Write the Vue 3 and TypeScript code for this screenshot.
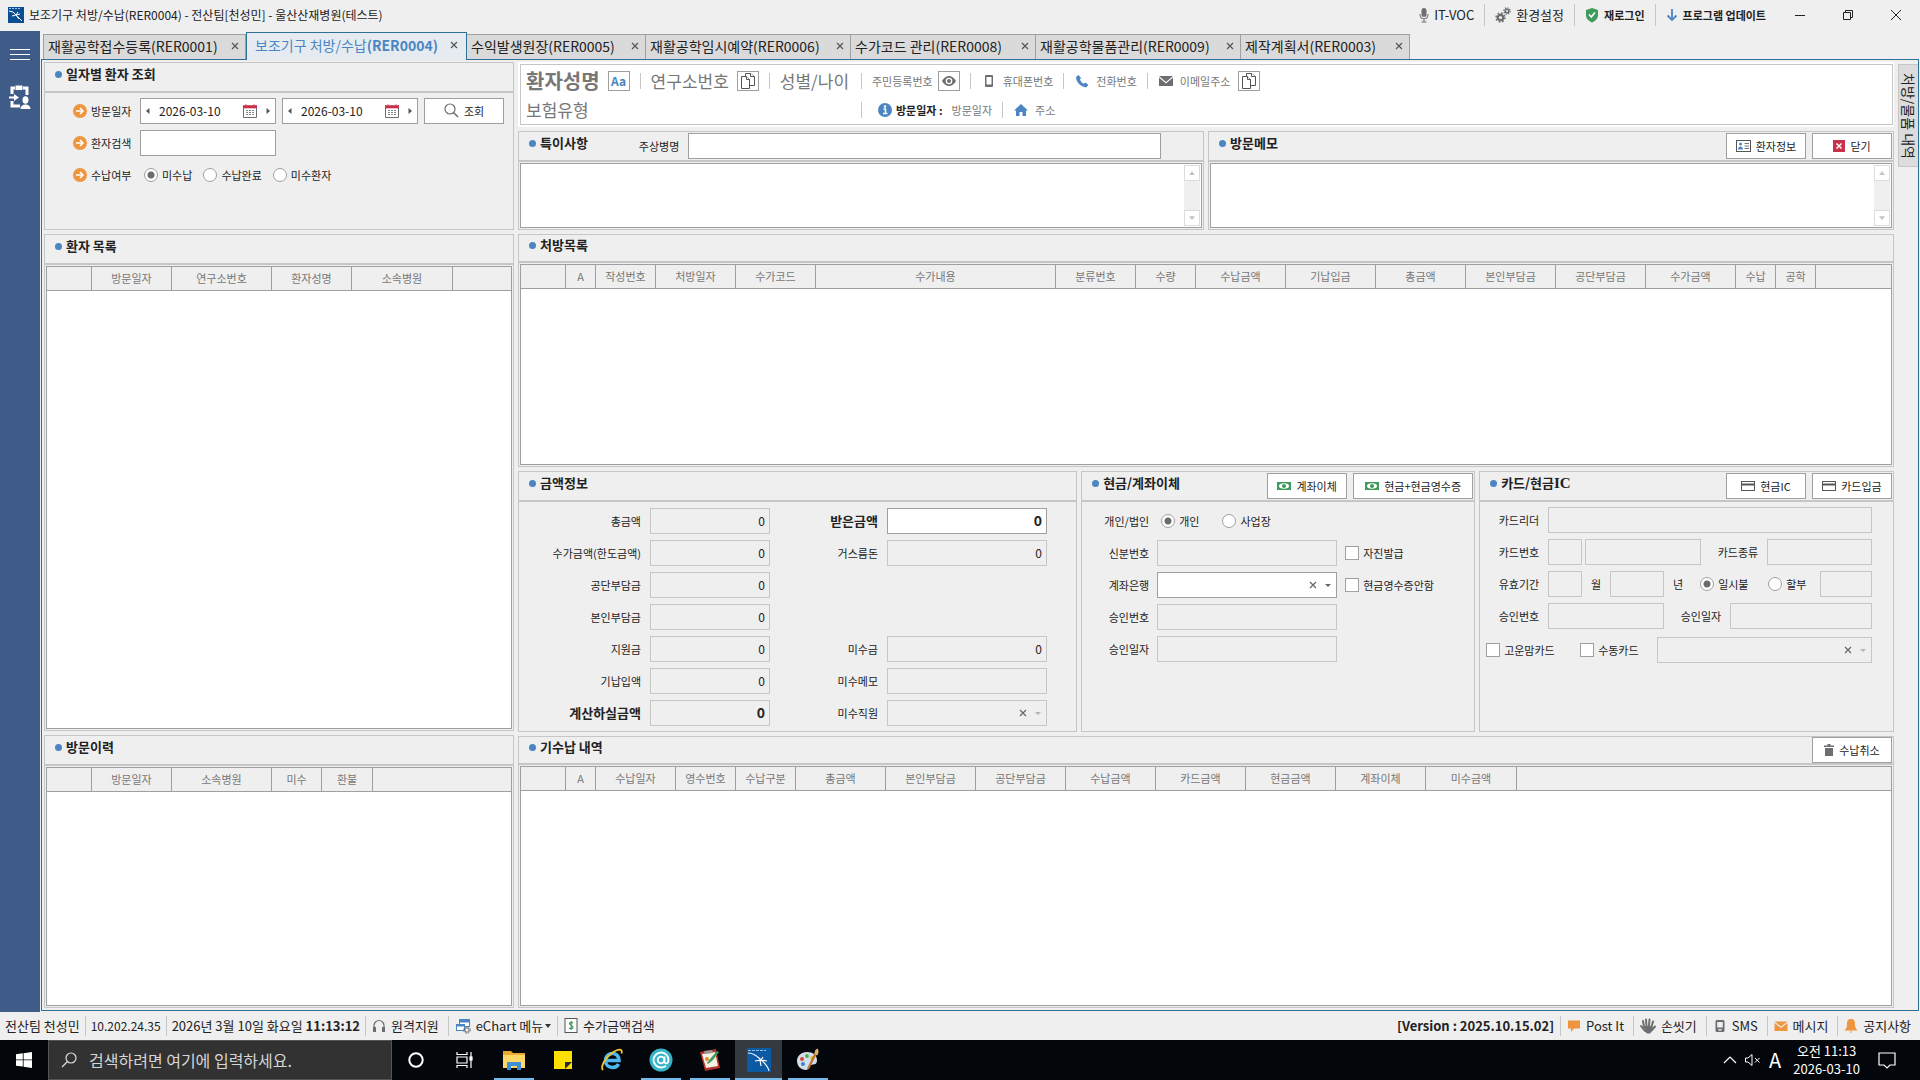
<script setup lang="ts">
import { ref } from 'vue'

interface Column {
  label: string
  width?: number
}

interface Tab {
  name: string
  code: string
  width: number
}

const tabs: Tab[] = [
  { name: '재활공학접수등록', code: '(RER0001)', width: 203 },
  { name: '보조기구 처방/수납', code: '(RER0004)', width: 221 },
  { name: '수익발생원장', code: '(RER0005)', width: 179 },
  { name: '재활공학임시예약', code: '(RER0006)', width: 205 },
  { name: '수가코드 관리', code: '(RER0008)', width: 185 },
  { name: '재활공학물품관리', code: '(RER0009)', width: 205 },
  { name: '제작계획서', code: '(RER0003)', width: 169 },
]
const activeTab = ref('(RER0004)')

const patientColumns: Column[] = [
  { label: '', width: 45 },
  { label: '방문일자', width: 80 },
  { label: '연구소번호', width: 100 },
  { label: '환자성명', width: 80 },
  { label: '소속병원', width: 101 },
  { label: '' },
]

const visitColumns: Column[] = [
  { label: '', width: 45 },
  { label: '방문일자', width: 80 },
  { label: '소속병원', width: 100 },
  { label: '미수', width: 50 },
  { label: '환불', width: 51 },
  { label: '' },
]

const orderColumns: Column[] = [
  { label: '', width: 45 },
  { label: 'A', width: 30 },
  { label: '작성번호', width: 60 },
  { label: '처방일자', width: 80 },
  { label: '수가코드', width: 80 },
  { label: '수가내용', width: 240 },
  { label: '분류번호', width: 80 },
  { label: '수량', width: 60 },
  { label: '수납금액', width: 90 },
  { label: '기납입금', width: 90 },
  { label: '총금액', width: 90 },
  { label: '본인부담금', width: 90 },
  { label: '공단부담금', width: 90 },
  { label: '수가금액', width: 90 },
  { label: '수납', width: 40 },
  { label: '공학', width: 40 },
  { label: '' },
]

const receiptColumns: Column[] = [
  { label: '', width: 45 },
  { label: 'A', width: 30 },
  { label: '수납일자', width: 80 },
  { label: '영수번호', width: 60 },
  { label: '수납구분', width: 60 },
  { label: '총금액', width: 90 },
  { label: '본인부담금', width: 90 },
  { label: '공단부담금', width: 90 },
  { label: '수납금액', width: 90 },
  { label: '카드금액', width: 90 },
  { label: '현금금액', width: 90 },
  { label: '계좌이체', width: 90 },
  { label: '미수금액', width: 91 },
  { label: '' },
]

const visitFrom = ref('2026-03-10')
const visitTo = ref('2026-03-10')
const keyword = ref('')
const payState = ref('미수납')
const payStates = ['미수납', '수납완료', '미수환자']
const payer = ref('개인')
const installment = ref('일시불')
const received = ref('0')
</script>

<template>
  <div class="screen">
    <header class="titlebar">
      <svg class="app-logo" width="16" height="16" viewBox="0 0 16 16">
        <rect width="16" height="16" fill="#0b4f93" />
        <path d="M1 1.500h12" stroke="#9cc3e6" stroke-dasharray="2 1" />
        <path d="M1 4l4 1 9 9M10 5L8 8l-4 1M8 8l3 4M8 8l4-1" stroke="#fff" fill="none" />
      </svg>
      <h1>보조기구 처방/수납(RER0004) - 전산팀[천성민] - 울산산재병원(테스트)</h1>
      <nav class="title-tools">
        <button class="tool" type="button">
          <svg width="10" height="16" viewBox="0 0 10 16">
            <rect x="2.500" y="1" width="5" height="9" rx="2.500" fill="#6d6e71" />
            <path d="M1 7v1a4 4 0 0 0 8 0V7M5 12v3M2.500 15h5" stroke="#6d6e71" fill="none" />
          </svg>
          IT-VOC
        </button>
        <button class="tool" type="button">
          <svg width="16" height="16" viewBox="0 0 16 16" fill="none" stroke="#6d6e71">
            <circle cx="5.500" cy="10.500" r="2.700" stroke-width="2.200" />
            <circle cx="5.500" cy="10.500" r="4.400" stroke-width="1.600" stroke-dasharray="1.700 1.750" />
            <circle cx="12" cy="4" r="1.800" stroke-width="1.600" />
            <circle cx="12" cy="4" r="3.100" stroke-width="1.400" stroke-dasharray="1.200 1.230" />
          </svg>
          환경설정
        </button>
        <button class="tool strong" type="button">
          <svg width="14" height="16" viewBox="0 0 14 16">
            <path d="M7 1l6 2v5c0 4-3 6-6 7.500C4 14 1 12 1 8V3z" fill="#3f9b5b" />
            <path d="M4 7.500l2.300 2.500L10 5.500" stroke="#fff" stroke-width="1.600" fill="none" />
          </svg>
          재로그인
        </button>
        <button class="tool strong" type="button">
          <svg width="12" height="14" viewBox="0 0 12 14" fill="none" stroke="#4b86c2" stroke-width="1.800">
            <path d="M6 1v11M1.500 7.500L6 12l4.500-4.500" />
          </svg>
          프로그램 업데이트
        </button>
      </nav>
      <div class="window-controls">
        <button type="button" aria-label="최소화">
          <svg width="12" height="12" viewBox="0 0 12 12"><path d="M1 6.500h10" stroke="#222" /></svg>
        </button>
        <button type="button" aria-label="이전 크기로">
          <svg width="12" height="12" viewBox="0 0 12 12" fill="none" stroke="#222">
            <path d="M1.500 3.500h7v7h-7zM3.500 3.500v-2h7v7h-2" />
          </svg>
        </button>
        <button type="button" aria-label="창 닫기">
          <svg width="12" height="12" viewBox="0 0 12 12"><path d="M1 1l10 10M11 1L1 11" stroke="#222" /></svg>
        </button>
      </div>
    </header>

    <div class="workspace">
      <aside class="sidebar">
        <button type="button" aria-label="메뉴">
          <svg width="20" height="12" viewBox="0 0 20 12"><path d="M0 0.500h20M0 5.500h20M0 10.500h20" stroke="#fff" /></svg>
        </button>
        <button type="button" aria-label="환자 접수">
          <svg width="22" height="24" viewBox="0 0 22 24">
            <path d="M3 9V3h3M14 3h4v7M3 16v5h8" stroke="#fff" stroke-width="3" fill="none" />
            <rect x="6.500" y="0.500" width="7" height="4.500" fill="#fff" />
            <path d="M0 11.500h5V9l5 3.500L5 16v-2.500H0z" fill="#fff" />
            <ellipse cx="16.500" cy="15" rx="3" ry="3.800" fill="#fff" />
            <path d="M11.500 24c0-3 2-4.500 5-4.500s5 1.500 5 4.500z" fill="#fff" />
          </svg>
        </button>
      </aside>

      <div class="main">
        <nav class="tabs">
          <div
            v-for="tab in tabs"
            :key="tab.code"
            class="tab"
            :class="{ active: tab.code === activeTab }"
            :style="{ width: tab.width + 'px' }"
          >
            <button class="tab-label" type="button" @click="activeTab = tab.code">
              {{ tab.name }}<span>{{ tab.code }}</span>
            </button>
            <button class="tab-close" type="button" aria-label="탭 닫기">
              <svg width="8" height="8" viewBox="0 0 8 8"><path d="M1 1l6 6M7 1L1 7" stroke="#555" stroke-width="1.200" /></svg>
            </button>
          </div>
        </nav>

        <div class="frame">
          <div class="left">
            <section class="panel search">
              <div class="panel-head"><h2>일자별 환자 조회</h2></div>
              <form class="search-form" @submit.prevent>
                <div class="search-row">
                  <label class="search-label" for="visit-from">
                    <svg class="arrow-dot" width="14" height="14" viewBox="0 0 14 14">
                      <circle cx="7" cy="7" r="7" fill="#f0953f" />
                      <path d="M3 7h7M7 4l3 3-3 3" stroke="#fff" stroke-width="1.600" fill="none" />
                    </svg>
                    방문일자
                  </label>
                  <div class="date">
                    <button type="button" aria-label="이전"><svg width="4" height="6" viewBox="0 0 4 6"><path d="M3.500 0v6L0 3z" fill="#555" /></svg></button>
                    <input id="visit-from" v-model="visitFrom" type="text" />
                    <button type="button" aria-label="달력">
                      <svg width="14" height="14" viewBox="0 0 14 14">
                        <path d="M0.500 3.500v10h13v-10" stroke="#6d6e71" fill="#fff" />
                        <path d="M0 1.500h14v2.500H0zM3 0v2M11 0v2" fill="#c9304a" stroke="#c9304a" stroke-width="0.600" />
                        <path d="M3 6.500h8M3 8.500h8M3 10.500h8" stroke="#888" stroke-dasharray="2 1" />
                      </svg>
                    </button>
                    <button type="button" aria-label="다음"><svg width="4" height="6" viewBox="0 0 4 6"><path d="M0.500 0v6L4 3z" fill="#555" /></svg></button>
                  </div>
                  <div class="date">
                    <button type="button" aria-label="이전"><svg width="4" height="6" viewBox="0 0 4 6"><path d="M3.500 0v6L0 3z" fill="#555" /></svg></button>
                    <input v-model="visitTo" type="text" aria-label="방문일자 종료" />
                    <button type="button" aria-label="달력">
                      <svg width="14" height="14" viewBox="0 0 14 14">
                        <path d="M0.500 3.500v10h13v-10" stroke="#6d6e71" fill="#fff" />
                        <path d="M0 1.500h14v2.500H0zM3 0v2M11 0v2" fill="#c9304a" stroke="#c9304a" stroke-width="0.600" />
                        <path d="M3 6.500h8M3 8.500h8M3 10.500h8" stroke="#888" stroke-dasharray="2 1" />
                      </svg>
                    </button>
                    <button type="button" aria-label="다음"><svg width="4" height="6" viewBox="0 0 4 6"><path d="M0.500 0v6L4 3z" fill="#555" /></svg></button>
                  </div>
                  <button class="btn" type="submit">
                    <svg width="15" height="15" viewBox="0 0 15 15" fill="none" stroke="#6d6e71" stroke-width="1.200">
                      <circle cx="6" cy="6" r="5" /><path d="M9.500 9.500L14 14" stroke-width="1.600" />
                    </svg>
                    조회
                  </button>
                </div>
                <div class="search-row">
                  <label class="search-label" for="keyword">
                    <svg class="arrow-dot" width="14" height="14" viewBox="0 0 14 14">
                      <circle cx="7" cy="7" r="7" fill="#f0953f" />
                      <path d="M3 7h7M7 4l3 3-3 3" stroke="#fff" stroke-width="1.600" fill="none" />
                    </svg>
                    환자검색
                  </label>
                  <input id="keyword" v-model="keyword" class="field open keyword" type="text" />
                </div>
                <div class="search-row">
                  <span class="search-label">
                    <svg class="arrow-dot" width="14" height="14" viewBox="0 0 14 14">
                      <circle cx="7" cy="7" r="7" fill="#f0953f" />
                      <path d="M3 7h7M7 4l3 3-3 3" stroke="#fff" stroke-width="1.600" fill="none" />
                    </svg>
                    수납여부
                  </span>
                  <div class="states">
                    <label v-for="state in payStates" :key="state" class="choice">
                      <input v-model="payState" type="radio" name="pay-state" :value="state" />{{ state }}
                    </label>
                  </div>
                </div>
              </form>
            </section>

            <section class="panel grow">
              <div class="panel-head"><h2>환자 목록</h2></div>
              <div class="grid-box">
                <table>
                  <colgroup>
                    <col v-for="(c, i) in patientColumns" :key="i" :style="c.width ? { width: c.width + 'px' } : undefined" />
                  </colgroup>
                  <thead>
                    <tr><th v-for="(c, i) in patientColumns" :key="i">{{ c.label }}</th></tr>
                  </thead>
                </table>
              </div>
            </section>

            <section class="panel visits">
              <div class="panel-head"><h2>방문이력</h2></div>
              <div class="grid-box">
                <table>
                  <colgroup>
                    <col v-for="(c, i) in visitColumns" :key="i" :style="c.width ? { width: c.width + 'px' } : undefined" />
                  </colgroup>
                  <thead>
                    <tr><th v-for="(c, i) in visitColumns" :key="i">{{ c.label }}</th></tr>
                  </thead>
                </table>
              </div>
            </section>
          </div>

          <div class="right">
            <section class="patient">
              <div class="patient-inner">
                <div class="info-row">
                  <div class="info-lead">
                    <strong class="patient-name">환자성명</strong>
                    <button class="mini aa" type="button">Aa</button>
                    <i class="sep"></i>
                    <span class="big">연구소번호</span>
                    <button class="mini" type="button" aria-label="연구소번호 복사">
                      <svg width="14" height="16" viewBox="0 0 14 16" fill="#fff" stroke="#555">
                        <path d="M4.500 0.500h5l4 3v9h-9z" /><path d="M9.500 0.500v3h4" />
                        <path d="M0.500 3.500h5l3 3v9h-8z" /><path d="M5.500 3.500v3h3" />
                      </svg>
                    </button>
                    <i class="sep"></i>
                    <span class="big">성별/나이</span>
                  </div>
                  <i class="sep"></i>
                  <span>주민등록번호</span>
                  <button class="mini eye" type="button" aria-label="주민등록번호 보기">
                    <svg width="14" height="10" viewBox="0 0 14 10">
                      <path d="M0 5c2-3.500 4.500-5 7-5s5 1.500 7 5c-2 3.500-4.500 5-7 5S2 8.500 0 5z" fill="#6d6e71" />
                      <circle cx="7" cy="5" r="3.300" fill="#fff" /><circle cx="7" cy="5" r="2" fill="#6d6e71" />
                    </svg>
                  </button>
                  <i class="sep"></i>
                  <svg class="info-icon" width="14" height="14" viewBox="0 0 14 14">
                    <path fill-rule="evenodd" d="M4 1h6q1 0 1 1v10q0 1-1 1H4q-1 0-1-1V2q0-1 1-1zM4.500 3v7.500h5V3z" fill="#6d6e71" />
                  </svg>
                  <span>휴대폰번호</span>
                  <i class="sep"></i>
                  <svg class="info-icon" width="14" height="14" viewBox="0 0 14 14">
                    <path d="M3.500 1L1 3c0 5 5 10 10 10.500l2.500-2.500-3-2.500-1.800 1.300C7 9 5.500 7 5 5.500L6 4z" fill="#4b86c2" />
                  </svg>
                  <span>전화번호</span>
                  <i class="sep"></i>
                  <svg class="info-icon" width="14" height="14" viewBox="0 0 14 14">
                    <path d="M0 2h14L7 8z" fill="#6d6e71" /><path d="M0 3.500V12h14V3.500l-7 6z" fill="#6d6e71" />
                  </svg>
                  <span>이메일주소</span>
                  <button class="mini" type="button" aria-label="이메일주소 복사">
                    <svg width="14" height="16" viewBox="0 0 14 16" fill="#fff" stroke="#555">
                      <path d="M4.500 0.500h5l4 3v9h-9z" /><path d="M9.500 0.500v3h4" />
                      <path d="M0.500 3.500h5l3 3v9h-8z" /><path d="M5.500 3.500v3h3" />
                    </svg>
                  </button>
                </div>
                <div class="info-row second">
                  <div class="info-lead"><span class="big">보험유형</span></div>
                  <i class="sep"></i>
                  <svg class="info-icon after-lead" width="14" height="14" viewBox="0 0 14 14">
                    <circle cx="7" cy="7" r="7" fill="#4b86c2" />
                    <path d="M5.500 6h2v4.500M5 10.500h4.500" stroke="#fff" stroke-width="1.500" fill="none" />
                    <circle cx="7" cy="3.500" r="1.200" fill="#fff" />
                  </svg>
                  <span class="visit-date"><b>방문일자 :</b>방문일자</span>
                  <i class="sep"></i>
                  <svg class="info-icon" width="14" height="14" viewBox="0 0 14 14">
                    <path d="M7 1l7 6.500h-2V13H8.500V9h-3v4H2V7.500H0z" fill="#4b86c2" />
                  </svg>
                  <span>주소</span>
                </div>
              </div>
            </section>

            <div class="memo-row">
              <section class="panel">
                <div class="panel-head">
                  <h2>특이사항</h2>
                  <label class="diagnosis-label" for="diagnosis">주상병명</label>
                  <input id="diagnosis" class="field open diagnosis" type="text" />
                </div>
                <div class="memo">
                  <textarea aria-label="특이사항"></textarea>
                  <div class="scroll">
                    <button type="button" aria-label="위로"><svg width="6" height="4" viewBox="0 0 8 5"><path d="M0 5l4-5 4 5z" fill="#c4c4c4" /></svg></button>
                    <button type="button" aria-label="아래로"><svg width="6" height="4" viewBox="0 0 8 5"><path d="M0 0l4 5 4-5z" fill="#c4c4c4" /></svg></button>
                  </div>
                </div>
              </section>
              <section class="panel">
                <div class="panel-head">
                  <h2>방문메모</h2>
                  <div class="actions">
                    <button class="btn" type="button">
                      <svg width="15" height="12" viewBox="0 0 15 12">
                        <rect x="0.500" y="0.500" width="14" height="11" fill="#fff" stroke="#555" />
                        <circle cx="4.500" cy="4" r="1.500" fill="#4b86c2" />
                        <path d="M2 9.500c0-4 5-4 5 0z" fill="#4b86c2" />
                        <path d="M8.500 3.500H13M8.500 6H13M8.500 8.500H13" stroke="#777" />
                      </svg>
                      환자정보
                    </button>
                    <button class="btn" type="button">
                      <svg width="12" height="12" viewBox="0 0 12 12">
                        <rect width="12" height="12" fill="#c9304a" /><path d="M3.500 3.500l5 5M8.500 3.500l-5 5" stroke="#fff" stroke-width="1.500" />
                      </svg>
                      닫기
                    </button>
                  </div>
                </div>
                <div class="memo">
                  <textarea aria-label="방문메모"></textarea>
                  <div class="scroll">
                    <button type="button" aria-label="위로"><svg width="6" height="4" viewBox="0 0 8 5"><path d="M0 5l4-5 4 5z" fill="#c4c4c4" /></svg></button>
                    <button type="button" aria-label="아래로"><svg width="6" height="4" viewBox="0 0 8 5"><path d="M0 0l4 5 4-5z" fill="#c4c4c4" /></svg></button>
                  </div>
                </div>
              </section>
            </div>

            <section class="panel compact orders">
              <div class="panel-head"><h2>처방목록</h2></div>
              <div class="grid-box">
                <table>
                  <colgroup>
                    <col v-for="(c, i) in orderColumns" :key="i" :style="c.width ? { width: c.width + 'px' } : undefined" />
                  </colgroup>
                  <thead>
                    <tr><th v-for="(c, i) in orderColumns" :key="i">{{ c.label }}</th></tr>
                  </thead>
                </table>
              </div>
            </section>

            <div class="pay-row">
              <section class="panel amounts">
                <div class="panel-head"><h2>금액정보</h2></div>
                <div class="amount-grid">
                  <label for="total">총금액</label>
                  <input id="total" class="field" value="0" readonly />
                  <label class="key" for="received">받은금액</label>
                  <input id="received" v-model="received" class="field open key" />
                  <label for="limit">수가금액(한도금액)</label>
                  <input id="limit" class="field" value="0" readonly />
                  <label for="change">거스름돈</label>
                  <input id="change" class="field" value="0" readonly />
                  <label for="corp">공단부담금</label>
                  <input id="corp" class="field" value="0" readonly />
                  <label class="first" for="own">본인부담금</label>
                  <input id="own" class="field" value="0" readonly />
                  <label class="first" for="support">지원금</label>
                  <input id="support" class="field" value="0" readonly />
                  <label for="unpaid">미수금</label>
                  <input id="unpaid" class="field" value="0" readonly />
                  <label for="prepaid">기납입액</label>
                  <input id="prepaid" class="field" value="0" readonly />
                  <label for="unpaid-memo">미수메모</label>
                  <input id="unpaid-memo" class="field" readonly />
                  <label class="key" for="due">계산하실금액</label>
                  <input id="due" class="field key" value="0" readonly />
                  <label for="unpaid-staff">미수직원</label>
                  <div class="combo off">
                    <select id="unpaid-staff" disabled></select>
                    <button type="button" aria-label="지우기"><svg width="8" height="8" viewBox="0 0 8 8"><path d="M1 1l6 6M7 1L1 7" stroke="#666" stroke-width="1.200" /></svg></button>
                    <svg class="caret" width="6" height="3" viewBox="0 0 6 3"><path d="M0 0h6L3 3z" fill="#b5b5b5" /></svg>
                  </div>
                </div>
              </section>

              <section class="panel cash">
                <div class="panel-head">
                  <h2>현금/계좌이체</h2>
                  <div class="actions">
                    <button class="btn" type="button">
                      <svg width="14" height="8" viewBox="0 0 14 8">
                        <rect width="14" height="8" fill="#3f9b5b" /><ellipse cx="7" cy="4" rx="5" ry="2.800" fill="#fff" /><circle cx="7" cy="4" r="2" fill="#3f9b5b" />
                      </svg>
                      계좌이체
                    </button>
                    <button class="btn wide" type="button">
                      <svg width="14" height="8" viewBox="0 0 14 8">
                        <rect width="14" height="8" fill="#3f9b5b" /><ellipse cx="7" cy="4" rx="5" ry="2.800" fill="#fff" /><circle cx="7" cy="4" r="2" fill="#3f9b5b" />
                      </svg>
                      현금+현금영수증
                    </button>
                  </div>
                </div>
                <div class="cash-grid">
                  <span class="label">개인/법인</span>
                  <div class="payer">
                    <label class="choice"><input v-model="payer" type="radio" name="payer" value="개인" />개인</label>
                    <label class="choice"><input v-model="payer" type="radio" name="payer" value="사업장" />사업장</label>
                  </div>
                  <label class="label" for="id-number">신분번호</label>
                  <input id="id-number" class="field" readonly />
                  <label class="choice"><input type="checkbox" />자진발급</label>
                  <label class="label" for="bank">계좌은행</label>
                  <div class="combo">
                    <select id="bank"></select>
                    <button type="button" aria-label="지우기"><svg width="8" height="8" viewBox="0 0 8 8"><path d="M1 1l6 6M7 1L1 7" stroke="#666" stroke-width="1.200" /></svg></button>
                    <svg class="caret" width="6" height="3" viewBox="0 0 6 3"><path d="M0 0h6L3 3z" fill="#666" /></svg>
                  </div>
                  <label class="choice"><input type="checkbox" />현금영수증안함</label>
                  <label class="label" for="cash-approval">승인번호</label>
                  <input id="cash-approval" class="field" readonly />
                  <label class="label new-line" for="cash-date">승인일자</label>
                  <input id="cash-date" class="field" readonly />
                </div>
              </section>

              <section class="panel card">
                <div class="panel-head">
                  <h2>카드/현금<span class="serif">IC</span></h2>
                  <div class="actions">
                    <button class="btn" type="button">
                      <svg width="14" height="10" viewBox="0 0 14 10"><rect x="0.500" y="0.500" width="13" height="9" fill="#fff" stroke="#555" /><path d="M0 3.500h14" stroke="#555" stroke-width="2" /></svg>
                      현금IC
                    </button>
                    <button class="btn" type="button">
                      <svg width="14" height="10" viewBox="0 0 14 10"><rect x="0.500" y="0.500" width="13" height="9" fill="#fff" stroke="#555" /><path d="M0 3.500h14" stroke="#555" stroke-width="2" /></svg>
                      카드입금
                    </button>
                  </div>
                </div>
                <div class="card-form">
                  <div class="card-line">
                    <label class="label" for="reader">카드리더</label>
                    <input id="reader" class="field fill" readonly />
                  </div>
                  <div class="card-line">
                    <label class="label" for="card-number">카드번호</label>
                    <input id="card-number" class="field w34" readonly />
                    <input class="field w116 near" aria-label="카드번호 뒷자리" readonly />
                    <label class="label mid" for="card-kind">카드종류</label>
                    <input id="card-kind" class="field fill" readonly />
                  </div>
                  <div class="card-line">
                    <label class="label" for="month">유효기간</label>
                    <input id="month" class="field w34" readonly />
                    <label class="unit" for="month">월</label>
                    <input id="year" class="field w54" readonly />
                    <label class="unit" for="year">년</label>
                    <label class="choice lump"><input v-model="installment" type="radio" name="installment" value="일시불" />일시불</label>
                    <label class="choice split"><input v-model="installment" type="radio" name="installment" value="할부" />할부</label>
                    <input class="field fill" aria-label="할부개월" readonly />
                  </div>
                  <div class="card-line">
                    <label class="label" for="card-approval">승인번호</label>
                    <input id="card-approval" class="field w116" readonly />
                    <label class="label mid" for="card-date">승인일자</label>
                    <input id="card-date" class="field fill" readonly />
                  </div>
                  <div class="card-line last">
                    <label class="choice voucher"><input type="checkbox" />고운맘카드</label>
                    <label class="choice manual"><input type="checkbox" />수동카드</label>
                    <div class="combo off fill">
                      <select aria-label="수동카드 종류" disabled></select>
                      <button type="button" aria-label="지우기"><svg width="8" height="8" viewBox="0 0 8 8"><path d="M1 1l6 6M7 1L1 7" stroke="#666" stroke-width="1.200" /></svg></button>
                      <svg class="caret" width="6" height="3" viewBox="0 0 6 3"><path d="M0 0h6L3 3z" fill="#b5b5b5" /></svg>
                    </div>
                  </div>
                </div>
              </section>
            </div>

            <section class="panel compact grow">
              <div class="panel-head">
                <h2>기수납 내역</h2>
                <div class="actions">
                  <button class="btn" type="button">
                    <svg width="10" height="12" viewBox="0 0 10 12"><path d="M0 1.500h3.500V0h3v1.500H10V3H0zM1 4h8v8H1z" fill="#6d6e71" /></svg>
                    수납취소
                  </button>
                </div>
              </div>
              <div class="grid-box">
                <table>
                  <colgroup>
                    <col v-for="(c, i) in receiptColumns" :key="i" :style="c.width ? { width: c.width + 'px' } : undefined" />
                  </colgroup>
                  <thead>
                    <tr><th v-for="(c, i) in receiptColumns" :key="i">{{ c.label }}</th></tr>
                  </thead>
                </table>
              </div>
            </section>
          </div>

          <aside class="dock">
            <button type="button">처방/물품 내역</button>
          </aside>
        </div>
      </div>
    </div>

    <footer class="status">
      <span class="cell">전산팀 천성민</span>
      <span class="cell address">10.202.24.35</span>
      <span class="cell clock">2026년 3월 10일 화요일 <b>11:13:12</b></span>
      <button class="cell" type="button">
        <svg width="14" height="14" viewBox="0 0 14 14" fill="none" stroke="#6d6e71">
          <path d="M2 9V6.500a5 5 0 0 1 10 0V9" stroke-width="1.200" /><path d="M2.500 8v5M11.500 8v5" stroke-width="3" />
        </svg>
        원격지원
      </button>
      <button class="cell" type="button">
        <svg width="16" height="16" viewBox="0 0 16 16" fill="none">
          <rect x="4.500" y="1.500" width="10" height="7" fill="#fff" stroke="#4b86c2" /><path d="M4 3h11" stroke="#4b86c2" stroke-width="3" />
          <rect x="1.500" y="6.500" width="8" height="6" fill="#fff" stroke="#4b86c2" /><path d="M1 7.500h9" stroke="#4b86c2" stroke-width="2" />
          <circle cx="12" cy="12" r="2.200" fill="#efefef" stroke="#6d6e71" /><circle cx="12" cy="12" r="3.300" stroke="#6d6e71" stroke-dasharray="1.500 1.100" />
        </svg>
        eChart 메뉴<svg width="6" height="4" viewBox="0 0 6 4"><path d="M0 0h6L3 4z" fill="#333" /></svg>
      </button>
      <button class="cell" type="button">
        <svg width="14" height="15" viewBox="0 0 14 15">
          <rect x="1" y="0.500" width="12" height="14" fill="#fff" stroke="#555" />
          <path d="M9 5C8 4 5.500 4 5.500 5.600S9 7.500 9 9.200 6 11 5 10M7.200 3v9" stroke="#3f9b5b" stroke-width="1.200" fill="none" />
        </svg>
        수가금액검색
      </button>
      <span class="push"></span>
      <b class="version">[Version : 2025.10.15.02]</b>
      <button class="cell" type="button">
        <svg width="14" height="14" viewBox="0 0 14 14"><path d="M1 1.500h12v8H7L4 13V9.500H1z" fill="#f0953f" /></svg>
        Post It
      </button>
      <button class="cell" type="button">
        <svg width="16" height="16" viewBox="0 0 16 16" fill="none" stroke="#6d6e71" stroke-width="2" stroke-linecap="round">
          <path d="M4 9L3 3M6.500 8L6 1.500M9 8l.5-6.500M11.500 9L13 3.500M5 13L1 8M12 12l3-3.500" />
          <path d="M4 8l8 0 1 4-3 3.500H7L4.500 13z" fill="#6d6e71" stroke="none" />
        </svg>
        손씻기
      </button>
      <button class="cell" type="button">
        <svg width="14" height="14" viewBox="0 0 14 14"><path fill-rule="evenodd" d="M4 1h6q1.500 0 1.500 1.500v9Q11.500 13 10 13H4q-1.500 0-1.500-1.500v-9Q2.500 1 4 1zM4.200 3v5.500h5.600V3zM5.500 10v1.500h3V10z" fill="#6d6e71" /></svg>
        SMS
      </button>
      <button class="cell" type="button">
        <svg width="14" height="14" viewBox="0 0 14 14"><path d="M0.500 2.500h13L7 7.500z" fill="#f0953f" /><path d="M0.500 4v8h13V4L7 9z" fill="#f0953f" /></svg>
        메시지
      </button>
      <button class="cell" type="button">
        <svg width="14" height="16" viewBox="0 0 14 16"><path d="M7 1c3 0 4 2 4 5 0 3 .5 4.500 2.500 6.500h-13C2.500 10.500 3 9 3 6c0-3 1-5 4-5zM5.500 13.500h3L7 15z" fill="#f0953f" /></svg>
        공지사항
      </button>
    </footer>

    <div class="taskbar">
      <button class="start" type="button" aria-label="시작">
        <svg width="16" height="16" viewBox="0 0 16 16"><path d="M0 2.300l6.800-1v6.200H0zM7.600 1.200L16 0v7.500H7.600zM0 8.300h6.800v6.300L0 13.700zM7.600 8.300H16V16l-8.400-1.200z" fill="#fff" /></svg>
      </button>
      <label class="finder">
        <svg width="16" height="16" viewBox="0 0 16 16" fill="none" stroke="#ddd" stroke-width="1.200"><circle cx="10" cy="6" r="5" /><path d="M6.500 9.500L1 15" /></svg>
        <input type="text" placeholder="검색하려면 여기에 입력하세요." />
      </label>
      <button class="task" type="button" aria-label="코타나">
        <svg width="18" height="18" viewBox="0 0 18 18"><circle cx="9" cy="9" r="6.700" stroke="#fff" stroke-width="2" fill="none" /></svg>
      </button>
      <button class="task" type="button" aria-label="작업 보기">
        <svg width="18" height="16" viewBox="0 0 18 16" fill="none" stroke="#fff" stroke-width="1.200"><path d="M1 0v2.500h10V0M1 16v-2.500h10V16M1 5h10v6H1zM15 0v16" /><rect x="14" y="5" width="2" height="3" fill="#fff" /></svg>
      </button>
      <button class="task open" type="button" aria-label="파일 탐색기">
        <svg width="24" height="24" viewBox="0 0 24 24">
          <path d="M1 3h8l2 2h12v15H1z" fill="#e8a92f" /><path d="M1 7h22v13H1z" fill="#ffd768" />
          <path d="M5 22v-8h14v8h-4v-4H9v4z" fill="#3d8fd6" />
        </svg>
      </button>
      <button class="task" type="button" aria-label="스티커 메모">
        <svg width="24" height="24" viewBox="0 0 24 24"><path d="M3 3h18v18H3z" fill="#ffe100" /><path d="M14 14h7l-7 7z" fill="#2b2b2b" /></svg>
      </button>
      <button class="task" type="button" aria-label="인터넷 익스플로러">
        <svg width="24" height="24" viewBox="0 0 24 24" fill="none">
          <path d="M5.500 12.500H19c0-4.500-3-7-6.500-7s-7 2.800-7 7 3 7 7 7c3 0 5-1.300 6-3.500" stroke="#4db8ee" stroke-width="3.600" />
          <path d="M3 22C0 19 5 10 12 5s11-4 9.500.5" stroke="#f4c430" stroke-width="1.800" />
        </svg>
      </button>
      <button class="task open" type="button" aria-label="메일">
        <svg width="24" height="24" viewBox="0 0 24 24" fill="none">
          <circle cx="12" cy="12" r="11.500" fill="#35b4c8" />
          <circle cx="12" cy="12" r="3.300" stroke="#fff" stroke-width="1.800" />
          <path d="M15.500 8.500v5c0 3 4 2.500 4-1.500 0-4.500-3.500-7.500-7.500-7.500S4.500 8 4.500 12s3.500 7.500 7.500 7.500c2 0 3.500-.5 5-1.500" stroke="#fff" stroke-width="1.800" />
        </svg>
      </button>
      <button class="task open" type="button" aria-label="진료 기록">
        <svg width="24" height="24" viewBox="0 0 24 24">
          <path d="M2 4l16-3 4 19-15 3z" fill="#b5322c" /><path d="M4 6l13-2 3 14-12 2z" fill="#f4f1e6" />
          <path d="M6 3l8-1 1 3-8 1z" fill="#999" /><path d="M9 15l3-4 7-8 2 1-6 8-5 4z" fill="#3f9b5b" /><circle cx="9" cy="11" r="2" fill="#e28d2d" />
        </svg>
      </button>
      <button class="task open current" type="button" aria-label="병원 정보 시스템">
        <svg width="24" height="24" viewBox="0 0 24 24">
          <rect width="24" height="24" fill="#0c5aa3" />
          <path d="M1 2.500h18" stroke="#8fc0ea" stroke-dasharray="3 1" />
          <path d="M1 5c5 0 8 2 12 6 5 4 8 7 9 12M16 9l-2 3-6 1M13 12l1 6M14 12l6 1" stroke="#fff" stroke-width="1.200" fill="none" />
        </svg>
      </button>
      <button class="task open" type="button" aria-label="그림판">
        <svg width="24" height="24" viewBox="0 0 24 24">
          <path d="M11 4C5 4 1 8 1 13s4 9 9 9c3 0 2-3 4-4.500s7 0 7-5C21 7 17 4 11 4z" fill="#d3e0ea" />
          <circle cx="6" cy="11" r="2" fill="#d9463d" /><circle cx="11" cy="8" r="1.900" fill="#4caf50" /><circle cx="16" cy="10" r="1.900" fill="#f2b632" /><circle cx="7" cy="16" r="2" fill="#3f7fd0" />
          <path d="M12 21L20 5" stroke="#b9752f" stroke-width="2.200" /><path d="M18.500 6c0-3 1-5 3-5.500 1.500 2 1.500 4.500-.5 7z" fill="#e0b073" />
        </svg>
      </button>
      <span class="push"></span>
      <div class="tray">
        <button type="button" aria-label="숨겨진 아이콘"><svg width="14" height="8" viewBox="0 0 14 8"><path d="M1 7l6-6 6 6" stroke="#fff" stroke-width="1.200" fill="none" /></svg></button>
        <button type="button" aria-label="음소거"><svg width="16" height="12" viewBox="0 0 16 12" fill="none" stroke="#fff"><path d="M0.500 4v4h2.500L7 11.500V.5L3 4zM10 4l4.500 4.500M14.500 4L10 8.500" /></svg></button>
        <button class="ime" type="button">A</button>
        <time class="time"><span>오전 11:13</span><span>2026-03-10</span></time>
        <button type="button" aria-label="알림"><svg width="18" height="17" viewBox="0 0 18 17"><path d="M1 1h16v12h-5l-3 3-3-3H1z" stroke="#fff" stroke-width="1.200" fill="none" /></svg></button>
      </div>
    </div>
  </div>
</template>

<style>
body {
  background: #efefef;
}
</style>

<style scoped>
* {
  box-sizing: border-box;
}
.screen {
  display: flex;
  flex-direction: column;
  min-height: 100vh;
  background: #efefef;
  color: #222;
  font: 11px/16px "Noto Sans CJK KR", "Noto Sans", sans-serif;
}
button,
input,
select,
textarea {
  margin: 0;
  padding: 0;
  border: 0;
  background: none;
  color: inherit;
  font: inherit;
}
button {
  display: flex;
  align-items: center;
  justify-content: center;
}
svg {
  display: block;
  flex: none;
}
h1,
h2 {
  margin: 0;
}

/* title bar */
.titlebar {
  display: flex;
  align-items: center;
  height: 31px;
  padding: 0 0 2px 8px;
}
.titlebar h1 {
  margin-left: 5px;
  font-size: 12px;
  font-weight: 400;
}
.title-tools {
  display: flex;
  align-items: center;
  margin-left: auto;
}
.tool {
  height: 22px;
  padding: 0 10px;
  gap: 5px;
  border-left: 1px solid #c6c6c6;
  font-size: 13px;
}
.tool:first-child {
  border-left: 0;
}
.tool.strong {
  font-size: 11px;
  font-weight: 700;
}
.window-controls {
  display: flex;
}
.window-controls button {
  width: 48px;
  height: 28px;
}

/* shell */
.workspace {
  display: flex;
  flex: 1;
}
.sidebar {
  display: flex;
  flex-direction: column;
  align-items: center;
  gap: 24px;
  width: 40px;
  padding-top: 18px;
  background: #3f5b87;
}
.main {
  display: flex;
  flex: 1;
  flex-direction: column;
  min-width: 0;
  padding: 1px;
}
.tabs {
  display: flex;
  align-items: flex-end;
  height: 27px;
  padding-left: 2px;
}
.tab {
  display: flex;
  align-items: center;
  justify-content: space-between;
  height: 25px;
  padding: 0 6px 2px 4px;
  border: 1px solid #a0a0a0;
  border-bottom: 0;
  border-left-width: 0;
  background: #dadada;
  font-size: 14px;
}
.tab:first-child {
  border-left-width: 1px;
}
.tab.active {
  position: relative;
  height: 28px;
  margin-bottom: -1px;
  padding: 0 8px 3px;
  border: 1px solid #2f7096;
  border-bottom: 0;
  background: #e6ebf1;
  color: #4b86c2;
}
.tab.active span {
  font-weight: 700;
}
.frame {
  display: flex;
  flex: 1;
  gap: 4px;
  padding: 2px 0 2px 2px;
  border: 1px solid #2f7096;
}
.left {
  display: flex;
  flex-direction: column;
  gap: 4px;
  width: 470px;
}
.right {
  display: flex;
  flex: 1;
  flex-direction: column;
  gap: 4px;
  min-width: 0;
}
.dock {
  width: 20px;
  padding-top: 2px;
}
.dock button {
  width: 20px;
  height: 103px;
  border: 1px solid #c6c6c6;
  border-right: 0;
  background: #dcdcdc;
  font-size: 14px;
  text-orientation: sideways;
  writing-mode: vertical-rl;
}

/* panels */
.panel {
  display: flex;
  flex-direction: column;
  border: 1px solid #c6c6c6;
}
.grow {
  flex: 1;
}
.search {
  min-height: 168px;
}
.visits {
  min-height: 273px;
}
.orders {
  min-height: 233px;
}
.panel-head {
  display: flex;
  align-items: flex-start;
  height: 30px;
  padding: 1px 1px 0 10px;
  border-bottom: 2px solid #c6c6c6;
}
.compact .panel-head {
  height: 28px;
  padding-top: 0;
}
.panel-head h2 {
  display: flex;
  align-items: center;
  font-size: 13px;
  font-weight: 700;
  line-height: 20px;
}
.panel-head h2::before {
  width: 7px;
  height: 7px;
  margin-right: 4px;
  border-radius: 50%;
  background: #4b86c2;
  content: "";
}
.serif {
  font-family: "Liberation Serif", serif;
  font-size: 15px;
}
.actions {
  display: flex;
  gap: 6px;
  margin-left: auto;
}
.btn {
  width: 80px;
  height: 26px;
  padding-bottom: 1px;
  gap: 5px;
  border: 1px solid #9f9f9f;
  background: #fff;
}
.btn.wide {
  width: 120px;
}
.grid-box {
  flex: 1;
  margin: 1px;
  border: 1px solid #9f9f9f;
  background: #fff;
}
table {
  width: 100%;
  border-collapse: separate;
  border-spacing: 0;
  table-layout: fixed;
}
th {
  height: 24px;
  padding: 0 0 2px;
  border-right: 1px solid #9f9f9f;
  border-bottom: 1px solid #9f9f9f;
  background: #efefef;
  color: #777;
  font-weight: 400;
  text-align: center;
}
th:last-child {
  border-right: 0;
}

/* fields */
.field {
  width: 100%;
  min-width: 0;
  height: 26px;
  padding: 0 4px 2px;
  border: 1px solid #c6c6c6;
  font-size: 12px;
}
.field.open {
  border-color: #9f9f9f;
  background: #fff;
}
.combo {
  display: flex;
  align-items: center;
  height: 26px;
  padding-right: 5px;
  gap: 8px;
  border: 1px solid #9f9f9f;
  background: #fff;
}
.combo.off {
  border-color: #c6c6c6;
  background: none;
}
.combo select {
  flex: 1;
  min-width: 0;
  height: 24px;
  appearance: none;
}
.choice {
  display: flex;
  align-items: center;
  gap: 4px;
  white-space: nowrap;
}
.choice input {
  flex: none;
  width: 14px;
  height: 14px;
  border: 1px solid #9f9f9f;
  background: #fff;
  appearance: none;
}
.choice input[type="radio"] {
  border-radius: 50%;
}
.choice input[type="radio"]:checked {
  background: radial-gradient(circle, #6b6b6b 3px, #fff 4px);
}

/* search */
.search-form {
  display: flex;
  flex-direction: column;
  gap: 6px;
  padding: 5px 0 0 28px;
}
.search-row {
  display: flex;
  align-items: center;
  gap: 6px;
  height: 26px;
}
.search-label {
  display: flex;
  align-items: center;
  gap: 4px;
  width: 61px;
}
.date {
  display: flex;
  align-items: center;
  gap: 9px;
  width: 136px;
  height: 26px;
  padding: 0 5px;
  border: 1px solid #9f9f9f;
  background: #fff;
}
.date input {
  flex: 1;
  min-width: 0;
  font-size: 12px;
}
.keyword {
  width: 136px;
}
.states {
  display: flex;
  gap: 11px;
  padding-left: 4px;
}

/* patient summary */
.patient {
  padding: 2px 1px 2px 2px;
  background: #fff;
}
.patient-inner {
  padding: 4px 5px 2px;
  border: 1px solid #c6c6c6;
}
.info-row {
  display: flex;
  align-items: center;
  height: 24px;
  color: #777;
}
.info-row.second {
  margin-top: 5px;
}
.info-lead {
  display: flex;
  align-items: center;
  width: 335px;
}
.patient-name {
  font-size: 20px;
}
.big {
  font-size: 17px;
}
.sep {
  width: 1px;
  height: 16px;
  margin: 0 10px;
  background: #c6c6c6;
}
.info-lead + .sep {
  margin-left: 0;
}
.mini {
  width: 22px;
  height: 20px;
  margin-left: 8px;
  border: 1px solid #9f9f9f;
}
.mini.eye {
  margin-left: 5px;
}
.aa {
  color: #4b86c2;
  font-size: 12px;
  font-weight: 700;
}
.info-icon {
  margin: 0 7px 0 1px;
}
.after-lead {
  margin-left: 6px;
  margin-right: 4px;
}
.visit-date {
  display: flex;
  gap: 9px;
}
.visit-date b {
  color: #222;
}

/* memos */
.memo-row,
.pay-row {
  display: flex;
  gap: 4px;
}
.memo-row .panel {
  flex: 1;
  min-width: 0;
  height: 99px;
}
.diagnosis-label {
  margin-left: 51px;
  line-height: 26px;
}
.diagnosis {
  width: 473px;
  margin-left: 9px;
}
.memo {
  display: flex;
  flex: 1;
  margin: 1px;
  border: 1px solid #9f9f9f;
  background: #fff;
}
.memo textarea {
  flex: 1;
  resize: none;
}
.scroll {
  display: flex;
  flex-direction: column;
  justify-content: space-between;
  width: 16px;
  margin: 1px;
  background: #efefef;
}
.scroll button {
  width: 16px;
  height: 16px;
  border: 1px solid #dcdcdc;
  background: #fff;
}

/* payment */
.pay-row {
  min-height: 261px;
}
.amounts {
  flex: 560 1 0;
}
.cash {
  flex: 394 1 0;
}
.card {
  flex: 415 1 0;
}
.amount-grid {
  display: grid;
  grid-template-columns: 122px 120px 99px 160px;
  gap: 6px 9px;
  align-items: center;
  padding-top: 6px;
  text-align: right;
}
.amount-grid .first {
  grid-column: 1;
}
.amount-grid .field {
  text-align: right;
}
.amount-grid label.key {
  font-size: 13px;
  font-weight: 700;
}
.amount-grid .field.key {
  font-size: 14px;
  font-weight: 700;
}
.cash-grid {
  display: grid;
  grid-template-columns: 67px 180px 1fr;
  gap: 6px 8px;
  align-items: center;
  padding-top: 6px;
}
.cash-grid .label {
  text-align: right;
}
.payer {
  display: flex;
  grid-column: 2 / 4;
  gap: 23px;
  height: 26px;
  padding-left: 4px;
}
.new-line {
  grid-column: 1;
}
.card-form {
  display: flex;
  flex-direction: column;
  gap: 6px;
  padding: 5px 21px 0 0;
}
.card-line {
  display: flex;
  align-items: center;
}
.card-line > .label {
  width: 59px;
  margin-right: 9px;
  text-align: right;
  flex: none;
}
.card-line > .label.mid {
  width: 57px;
}
.card-line .field {
  flex: none;
}
.card-line .fill {
  flex: 1;
}
.card-line .w34 {
  width: 34px;
}
.card-line .w54 {
  width: 54px;
}
.card-line .w116 {
  width: 116px;
}
.card-line .near {
  margin-left: 3px;
}
.unit {
  width: 28px;
  text-align: center;
}
.lump {
  width: 68px;
  margin-left: 8px;
}
.split {
  width: 52px;
}
.card-line.last {
  margin-top: 2px;
  padding-left: 6px;
}
.voucher {
  width: 94px;
}
.manual {
  width: 77px;
}

/* status bar */
.status {
  display: flex;
  align-items: center;
  height: 28px;
  padding-bottom: 1px;
  font-size: 13px;
}
.cell {
  display: flex;
  align-items: center;
  height: 20px;
  padding: 0 5px;
  gap: 2px;
  white-space: pre;
}
.cell.address {
  font-size: 12px;
}
.status button.cell {
  padding: 0 6px;
}
.cell + .cell,
.version + .cell {
  border-left: 1px solid #c6c6c6;
}
.version {
  margin-right: 6px;
}
.clock {
  gap: 0;
}
.push {
  flex: 1;
}

/* taskbar */
.taskbar {
  display: flex;
  height: 40px;
  background: #03060b;
  color: #fff;
}
.start {
  width: 48px;
}
.finder {
  display: flex;
  align-items: center;
  gap: 12px;
  width: 344px;
  padding-left: 12px;
  border: 1px solid #555;
  background: #323232;
}
.finder input {
  flex: 1;
  font-size: 16px;
}
.finder input::placeholder {
  color: #d5d5d5;
  opacity: 1;
}
.task {
  width: 47px;
  margin-right: 2px;
}
.task.open {
  background: linear-gradient(#76b9ed, #76b9ed) center bottom / 40px 2px no-repeat;
}
.task.current {
  background: linear-gradient(#76b9ed, #76b9ed) center bottom / 48px 2px no-repeat #353940;
}
.tray {
  display: flex;
  align-items: center;
  gap: 8px;
  padding-right: 24px;
}
.ime {
  font-size: 20px;
}
.time {
  display: flex;
  flex-direction: column;
  align-items: center;
  margin: 0 10px 0 4px;
  font-size: 13px;
  line-height: 18px;
}
</style>
